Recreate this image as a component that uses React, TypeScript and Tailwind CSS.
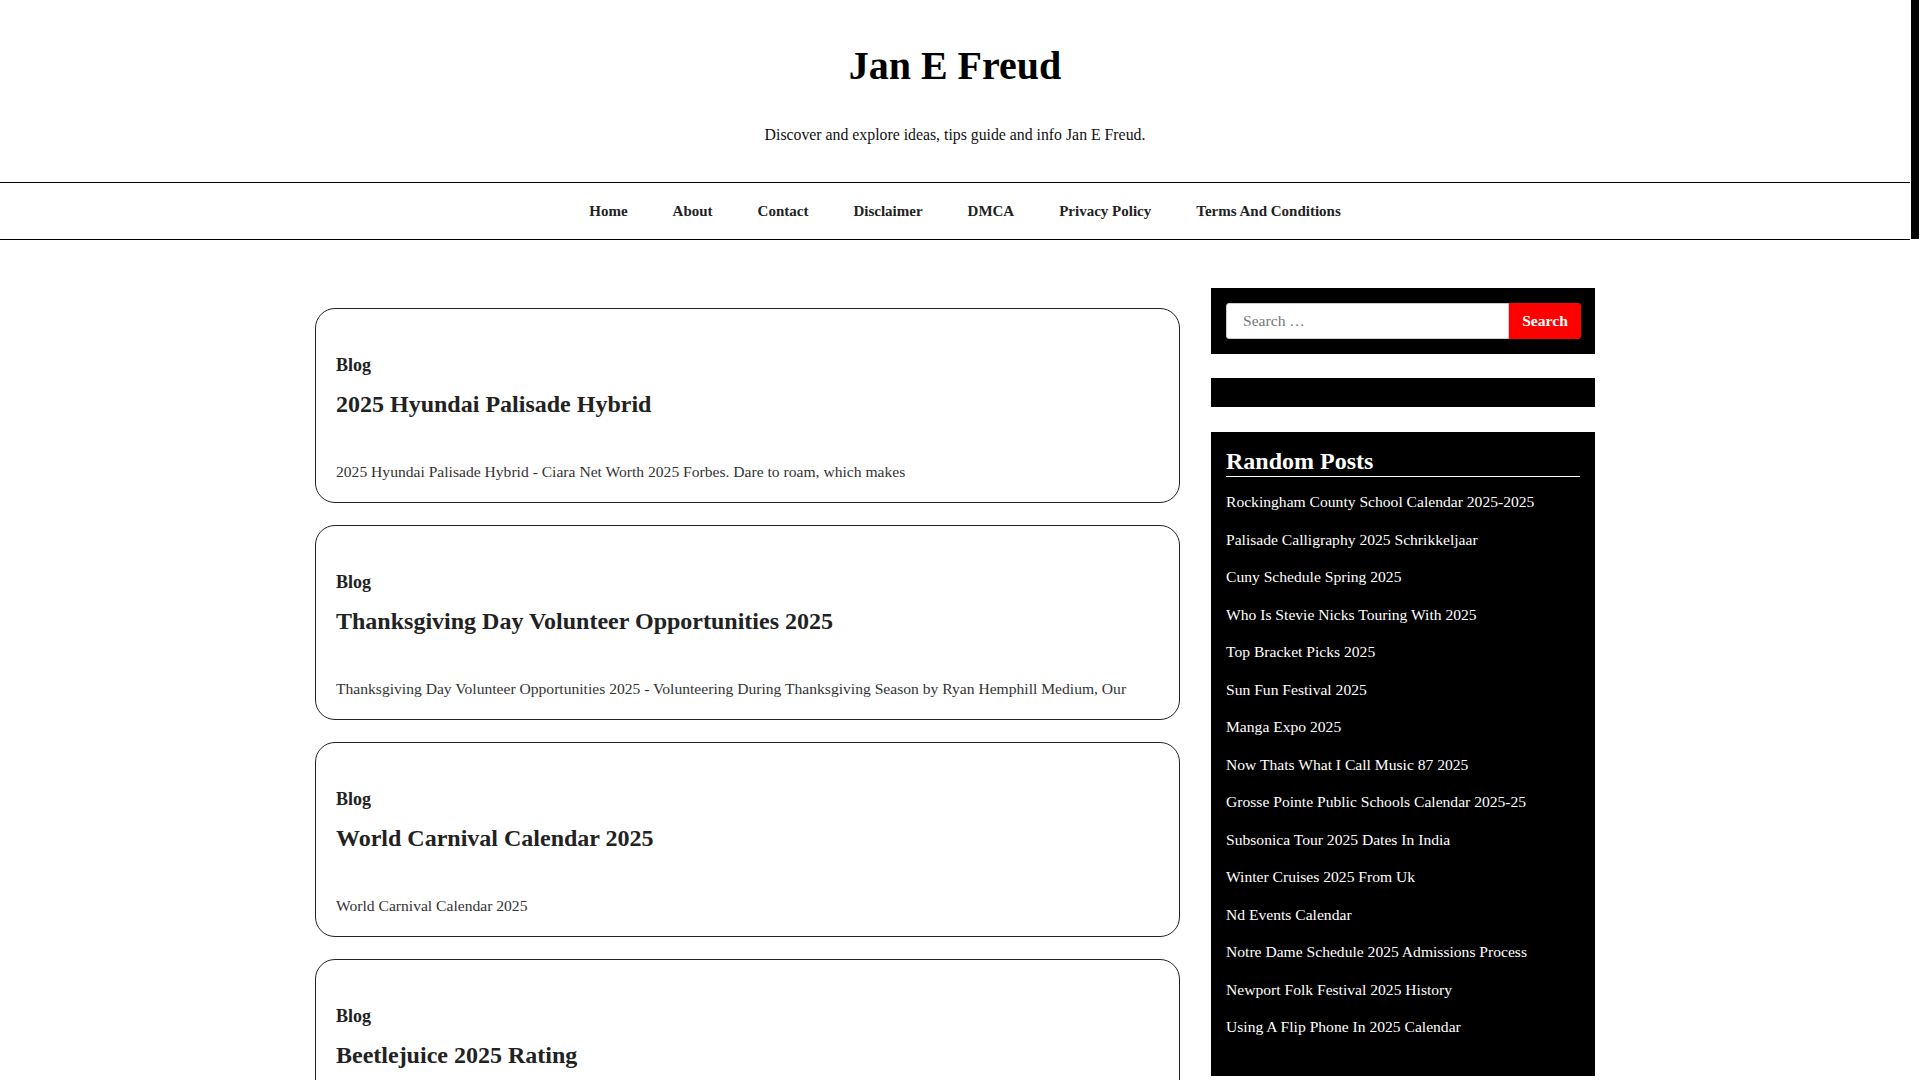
import React from 'react';

const navItems = ['Home', 'About', 'Contact', 'Disclaimer', 'DMCA', 'Privacy Policy', 'Terms And Conditions'];

const posts = [
  {
    title: '2025 Hyundai Palisade Hybrid',
    excerpt: '2025 Hyundai Palisade Hybrid - Ciara Net Worth 2025 Forbes. Dare to roam, which makes',
  },
  {
    title: 'Thanksgiving Day Volunteer Opportunities 2025',
    excerpt:
      'Thanksgiving Day Volunteer Opportunities 2025 - Volunteering During Thanksgiving Season by Ryan Hemphill Medium, Our',
  },
  { title: 'World Carnival Calendar 2025', excerpt: 'World Carnival Calendar 2025' },
  { title: 'Beetlejuice 2025 Rating', excerpt: 'Beetlejuice 2025 Rating' },
];

const randomPosts = [
  'Rockingham County School Calendar 2025-2025',
  'Palisade Calligraphy 2025 Schrikkeljaar',
  'Cuny Schedule Spring 2025',
  'Who Is Stevie Nicks Touring With 2025',
  'Top Bracket Picks 2025',
  'Sun Fun Festival 2025',
  'Manga Expo 2025',
  'Now Thats What I Call Music 87 2025',
  'Grosse Pointe Public Schools Calendar 2025-25',
  'Subsonica Tour 2025 Dates In India',
  'Winter Cruises 2025 From Uk',
  'Nd Events Calendar',
  'Notre Dame Schedule 2025 Admissions Process',
  'Newport Folk Festival 2025 History',
  'Using A Flip Phone In 2025 Calendar',
];

const PostCard: React.FC<{ title: string; excerpt: string }> = ({ title, excerpt }) => (
  <article className="border border-[#222] rounded-[20px] pt-[43px] pb-[18px] px-5 text-[#222]">
    <div className="text-[18px] leading-[27px] font-bold">Blog</div>
    <h2 className="mt-[10px] text-[24px] leading-[31px] font-bold">{title}</h2>
    <p className="mt-[40px] text-[15.6px] leading-[24px] text-[#333] whitespace-nowrap overflow-hidden">{excerpt}</p>
  </article>
);

export default function App() {
  return (
    <div
      className="flex h-[1080px] overflow-hidden bg-white"
      style={{ fontFamily: '"Liberation Serif", "Times New Roman", serif' }}
    >
      <div className="flex-1 min-w-0">
        {/* header */}
        <header className="pt-[42px] text-center">
          <h1 className="text-[40px] leading-[48px] font-bold text-black">Jan E Freud</h1>
          <p className="mt-[33px] text-[15.8px] leading-[24px] text-[#111]">
            Discover and explore ideas, tips guide and info Jan E Freud.
          </p>
        </header>

        <nav className="mt-[35px] border-y border-black h-[58px] flex items-center justify-center gap-[45px] pl-5">
          {navItems.map((item) => (
            <a key={item} className="text-[15px] font-bold text-[#222]">
              {item}
            </a>
          ))}
        </nav>

        {/* content */}
        <main className="mx-auto w-[1280px] pt-[48px] grid grid-cols-[865px_384px] gap-[31px]">
          <div className="pt-[20px] flex flex-col gap-[22px]">
            {posts.map((p) => (
              <PostCard key={p.title} title={p.title} excerpt={p.excerpt} />
            ))}
          </div>

          <aside className="flex flex-col">
            <div className="bg-black py-[15px] pl-[15px] pr-[14px] flex">
              <input
                placeholder="Search …"
                className="flex-1 h-[36px] bg-white border border-[#ccc] rounded-l-[3px] pl-[16px] text-[15.6px] text-[#333] placeholder:text-[#777] outline-none"
                style={{ fontFamily: '"Liberation Serif", serif' }}
              />
              <button className="w-[72px] h-[36px] bg-[#ff0000] text-white text-[15.6px] font-bold rounded-r-[3px]">
                Search
              </button>
            </div>

            <div className="mt-[24px] h-[29px] bg-black" />

            <div className="mt-[25px] bg-black pt-[14px] pb-[37px] px-[15px] text-white">
              <h3 className="text-[24px] leading-[30px] font-bold border-b border-white">Random Posts</h3>
              <ul className="mt-[14px] flex flex-col gap-[15px]">
                {randomPosts.map((r) => (
                  <li key={r} className="text-[15.6px] leading-[22.5px]">
                    {r}
                  </li>
                ))}
              </ul>
            </div>
          </aside>
        </main>
      </div>

      {/* scrollbar */}
      <div className="w-[10px] shrink-0 bg-white">
        <div className="ml-[1px] w-[8px] h-[239px] bg-black" />
      </div>
    </div>
  );
}
